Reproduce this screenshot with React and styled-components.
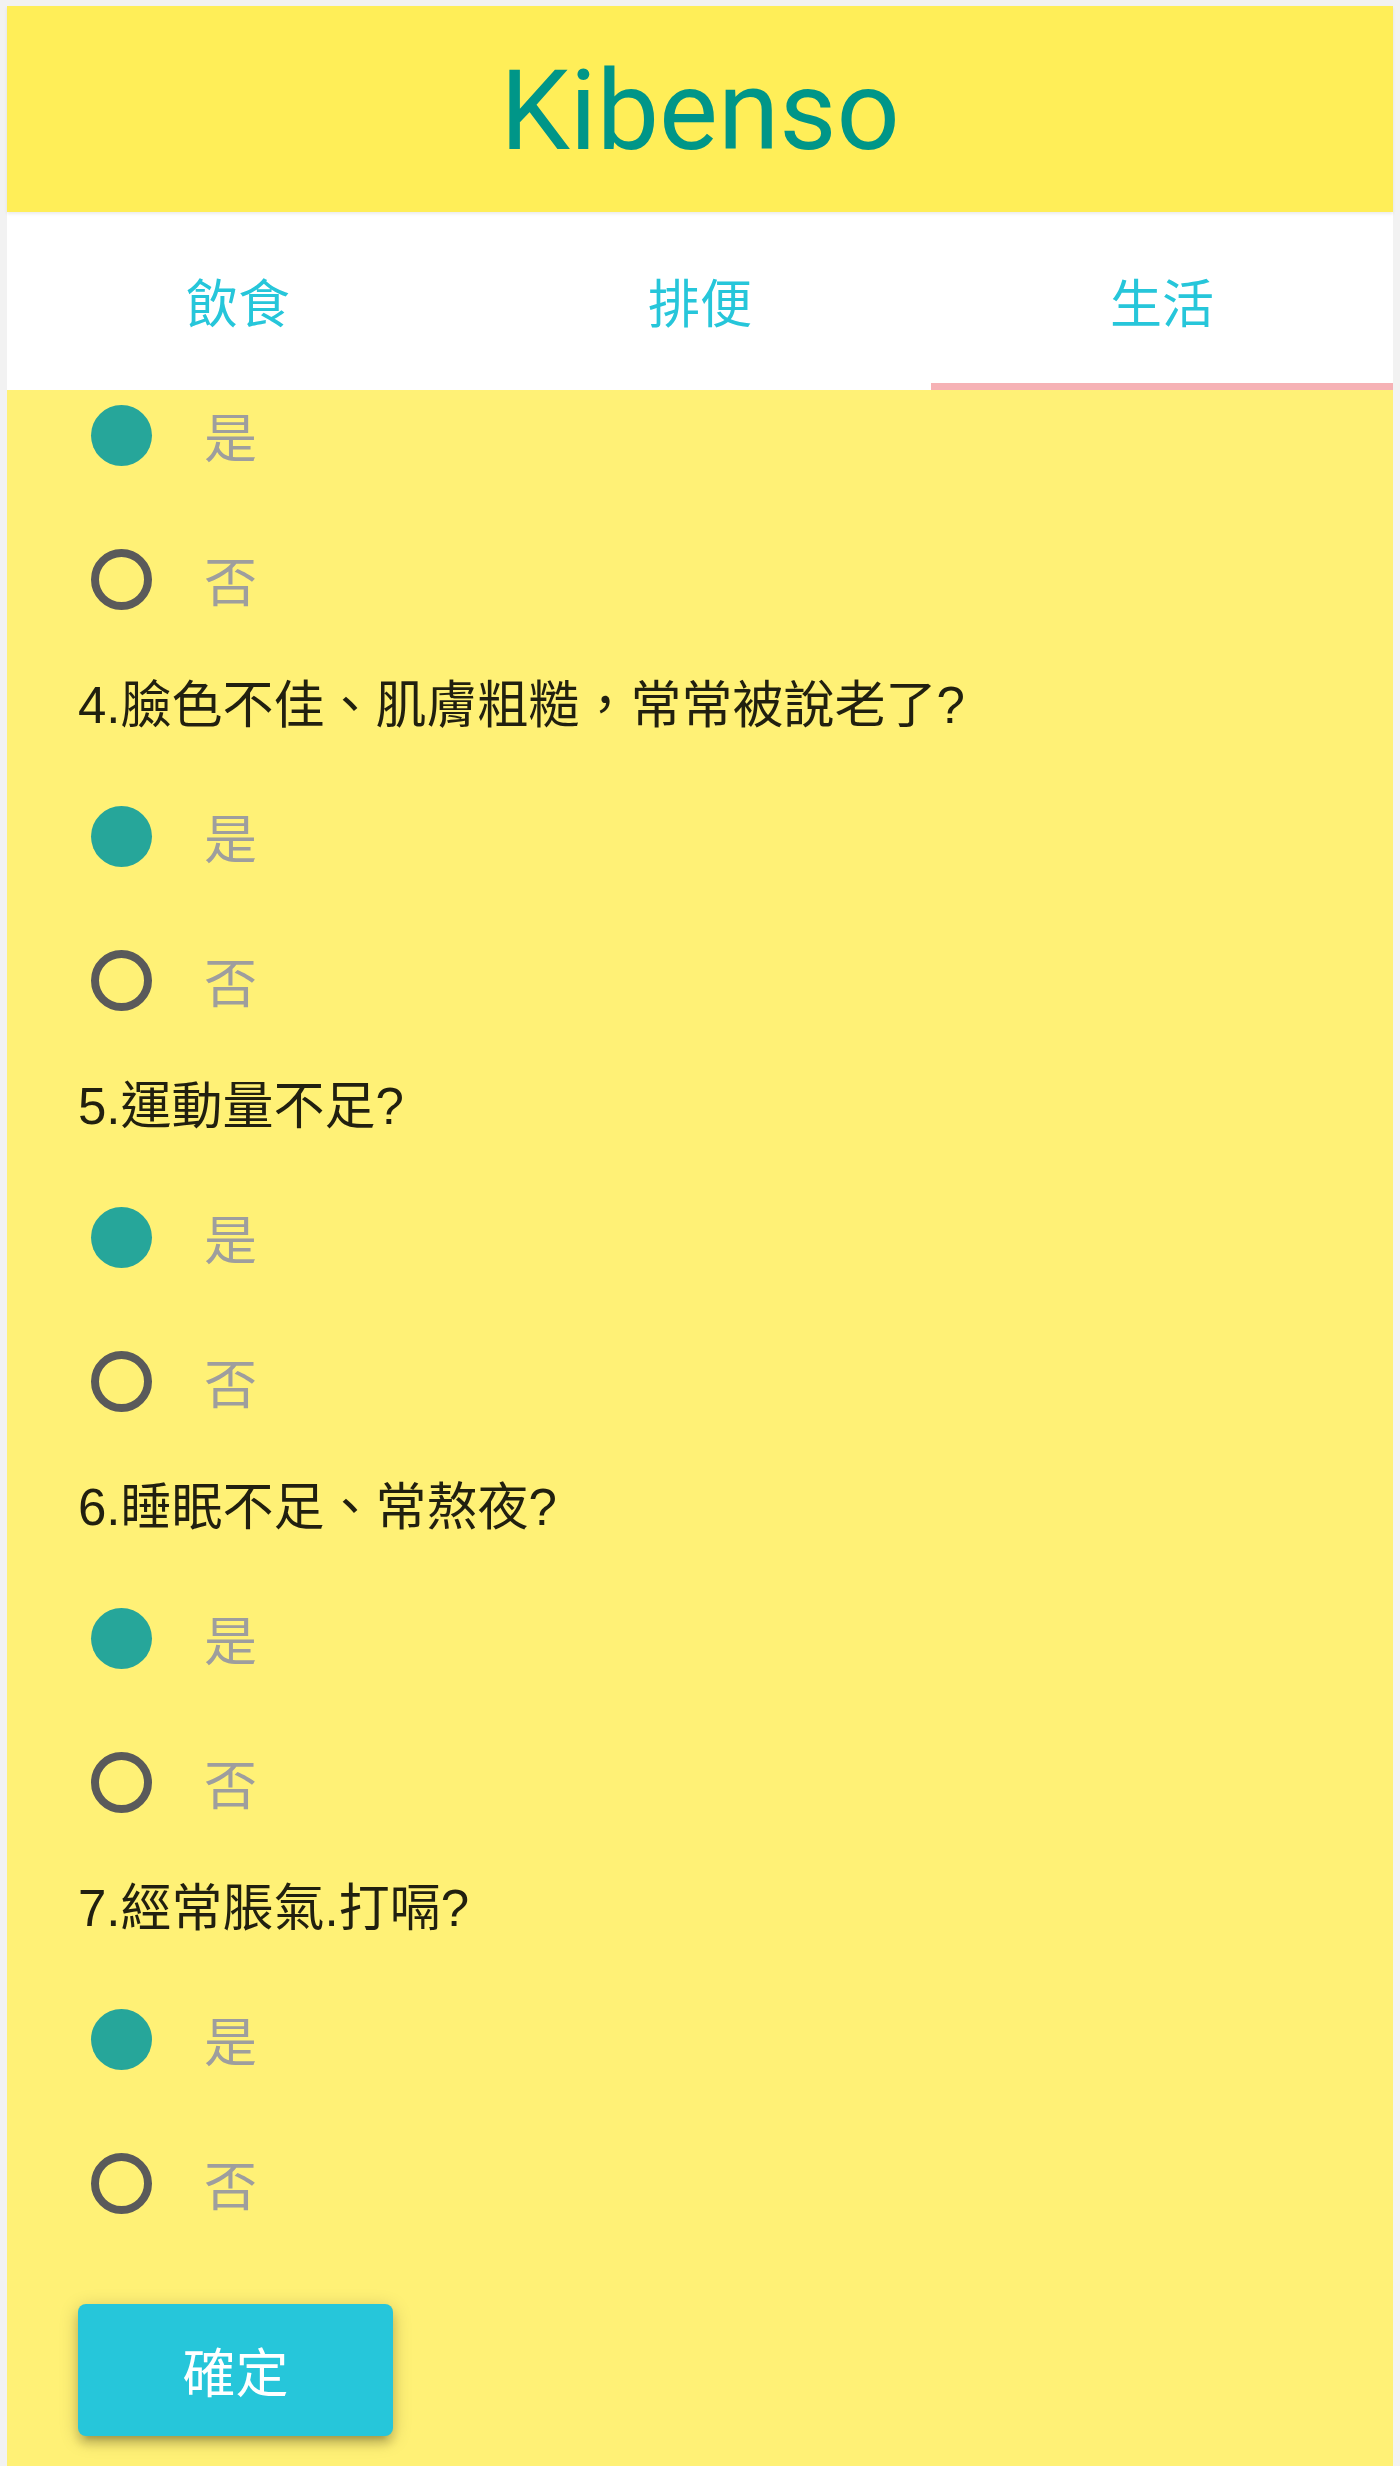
import React, { useState } from 'react';
import styled, { createGlobalStyle } from 'styled-components';

const GlobalStyle = createGlobalStyle`
  html, body {
    margin: 0;
    padding: 0;
    background: #ffffff;
  }
  * {
    box-sizing: border-box;
  }
`;

const Frame = styled.div`
  background: #f2f2f2;
  padding: 6px 7px 0 7px;
`;

const Card = styled.div`
  display: flex;
  flex-direction: column;
  background: #fff176;
`;

const Header = styled.header`
  position: relative;
  z-index: 2;
  height: 206px;
  display: flex;
  align-items: center;
  justify-content: center;
  background: #ffee58;
  box-shadow: 0 2px 3px rgba(0, 0, 0, 0.08);
`;

const Brand = styled.div`
  font-family: Roboto, "Liberation Sans", sans-serif;
  font-size: 111px;
  color: #009688;
  line-height: 1;
  padding-top: 4px;
`;

const TabBar = styled.nav`
  display: grid;
  grid-template-columns: repeat(3, 1fr);
  background: #ffffff;
  height: 178px;
`;

const Tab = styled.button`
  display: flex;
  align-items: center;
  justify-content: center;
  border: none;
  margin: 0;
  padding: 6px 0 0 0;
  background: transparent;
  cursor: pointer;
  font-family: "Liberation Sans", "Noto Sans CJK TC", sans-serif;
  font-size: 52px;
  color: #26c6da;
  border-bottom: 7px solid ${props => props.active ? '#f6b2b5' : 'transparent'};
`;

const Content = styled.form`
  overflow: hidden;
  padding: 0 0 30px 71px;
  display: flex;
  flex-direction: column;
  align-items: flex-start;
`;

const Group = styled.div`
  display: flex;
  flex-direction: column;
  align-self: stretch;
  ${props => props.scrolled && 'margin-top: -27px;'}
`;

const Question = styled.div`
  height: 113px;
  display: flex;
  align-items: center;
  padding-bottom: 14px;
  font-family: "Liberation Sans", "Noto Sans CJK TC", sans-serif;
  font-size: 51px;
  color: rgba(0, 0, 0, 0.87);
`;

const Option = styled.label`
  height: 144px;
  display: flex;
  align-items: center;
  cursor: pointer;
  input {
    display: none;
  }
`;

const Dot = styled.span`
  width: 61px;
  height: 61px;
  margin-left: 13px;
  border-radius: 50%;
  flex-shrink: 0;
  background: ${props => props.checked ? '#26a69a' : 'transparent'};
  border: ${props => props.checked ? 'none' : '8px solid #5a5a5a'};
`;

const OptionText = styled.span`
  margin-left: 52px;
  font-family: "Liberation Sans", "Noto Sans CJK TC", sans-serif;
  font-size: 53px;
  color: #9e9e9e;
`;

const SubmitButton = styled.button`
  margin-top: 49px;
  width: 315px;
  height: 132px;
  border: none;
  border-radius: 8px;
  background: #26c6da;
  color: #ffffff;
  font-family: "Liberation Sans", "Noto Sans CJK TC", sans-serif;
  font-size: 53px;
  cursor: pointer;
  box-shadow: 0 8px 8px 0 rgba(0, 0, 0, 0.14), 0 11px 4px -8px rgba(0, 0, 0, 0.12), 0 4px 19px 0 rgba(0, 0, 0, 0.2);
`;

const tabs = ['飲食', '排便', '生活'];

const questions = [
  { id: 3, text: '' },
  { id: 4, text: '4.臉色不佳、肌膚粗糙，常常被說老了?' },
  { id: 5, text: '5.運動量不足?' },
  { id: 6, text: '6.睡眠不足、常熬夜?' },
  { id: 7, text: '7.經常脹氣.打嗝?' },
];

const App = () => {
  const [activeTab, setActiveTab] = useState(2);
  const [answers, setAnswers] = useState({ 3: 'yes', 4: 'yes', 5: 'yes', 6: 'yes', 7: 'yes' });

  const pick = (id, value) => setAnswers({ ...answers, [id]: value });

  return (
    <>
      <GlobalStyle />
      <Frame>
        <Card>
          <Header>
            <Brand>Kibenso</Brand>
          </Header>
          <TabBar>
            {tabs.map((tab, index) => (
              <Tab key={tab} type="button" active={index === activeTab} onClick={() => setActiveTab(index)}>
                {tab}
              </Tab>
            ))}
          </TabBar>
          <Content onSubmit={e => e.preventDefault()}>
            {questions.map((q, index) => (
              <Group key={q.id} scrolled={index === 0}>
                {q.text && <Question>{q.text}</Question>}
                <Option>
                  <input type="radio" name={`q${q.id}`} checked={answers[q.id] === 'yes'} onChange={() => pick(q.id, 'yes')} />
                  <Dot checked={answers[q.id] === 'yes'} />
                  <OptionText>是</OptionText>
                </Option>
                <Option>
                  <input type="radio" name={`q${q.id}`} checked={answers[q.id] === 'no'} onChange={() => pick(q.id, 'no')} />
                  <Dot checked={answers[q.id] === 'no'} />
                  <OptionText>否</OptionText>
                </Option>
              </Group>
            ))}
            <SubmitButton type="submit">確定</SubmitButton>
          </Content>
        </Card>
      </Frame>
    </>
  );
};

export default App;
